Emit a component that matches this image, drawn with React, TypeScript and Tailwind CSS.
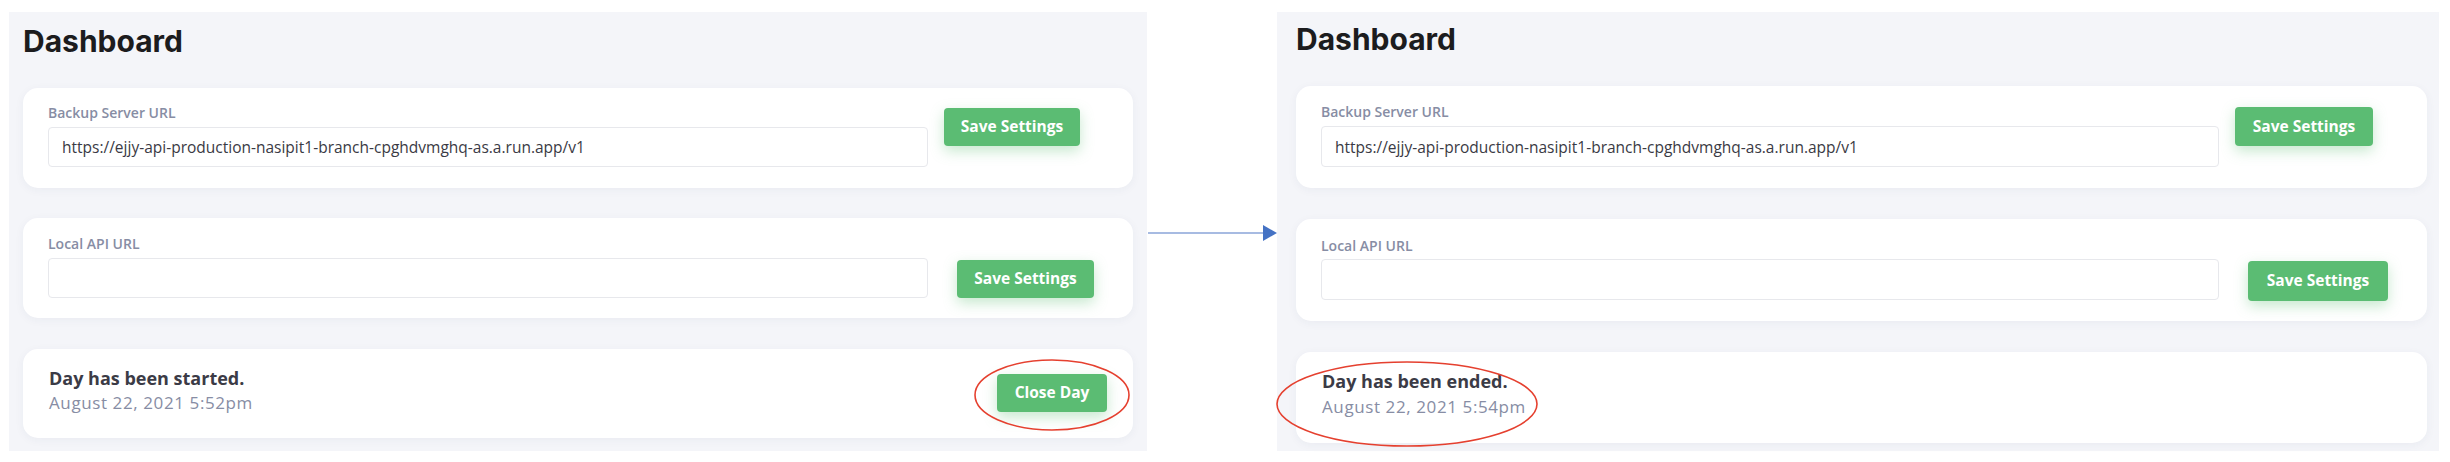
import React from 'react'

// 2 스냅샷: 왼쪽(시작), 오른쪽(종료) — 오른쪽은 약간 확대된 캡처
type Variant = 'left' | 'right'

const V = {
  left: {
    panel: 'ml-[9px] w-[1138px] pl-[14px] pr-[14px] pt-[11px]',
    card1: 'h-[100px] pl-[25px] pt-[15px]',
    card2: 'mt-[30px] h-[100px] pl-[25px] pt-[16px]',
    card3: 'mt-[31px] h-[89px] pl-[26px] pr-[26px] pt-[18px]',
    inputCol: 'w-[880px]',
    input1: 'mt-[4px] h-[40px]',
    input2: 'mt-[4px] h-[40px]',
    btn1: 'ml-[16px] mt-[5px] h-[38px] w-[136px]',
    btn2: 'ml-[29px] mt-[26px] h-[38px] w-[137px]',
    closeBtn: 'mt-[7px] h-[38px] w-[110px]',
    dateGap: 'mt-[4px]',
  },
  right: {
    panel: 'w-[1162px] pl-[19px] pr-[12px] pt-[9px]',
    card1: 'h-[102px] pl-[25px] pt-[16px]',
    card2: 'mt-[31px] h-[102px] pl-[25px] pt-[17px]',
    card3: 'mt-[31px] h-[91px] pl-[26px] pr-[26px] pt-[18px]',
    inputCol: 'w-[898px]',
    input1: 'mt-[4px] h-[41px]',
    input2: 'mt-[3px] h-[41px]',
    btn1: 'ml-[16px] mt-[5px] h-[39px] w-[138px]',
    btn2: 'ml-[29px] mt-[25px] h-[40px] w-[140px]',
    closeBtn: 'hidden',
    dateGap: 'mt-[5px]',
  },
}

const cardCls = 'flex rounded-[15px] bg-white shadow-[0_2px_10px_rgba(40,50,90,0.05)]'
const labelCls = 'block text-[14px] leading-5 font-semibold text-[#878da4]'
const inputCls =
  'block w-full rounded-[4px] border border-[#e7e8ec] bg-white px-[13px] text-[15.5px] text-[#3a3a44] outline-none'
const btnCls =
  'flex shrink-0 items-center justify-center rounded-[4px] bg-[#5bbc73] text-[15.5px] font-bold text-white shadow-[0_5px_14px_rgba(91,188,115,0.35)]'

function Panel({ variant }: { variant: Variant }) {
  const v = V[variant]
  const started = variant === 'left'
  return (
    <div className={`mt-[12px] h-[439px] shrink-0 bg-[#f4f5f9] ${v.panel}`}>
      <h1 className="font-['Inter',sans-serif] text-[30px] leading-9 font-bold text-[#1c1c1e]">Dashboard</h1>

      <div className="mt-[29px]">
        {/* 백업 서버 */}
        <div className={`${cardCls} ${v.card1}`}>
          <div className={v.inputCol}>
            <label className={labelCls}>Backup Server URL</label>
            <input
              readOnly
              value="https://ejjy-api-production-nasipit1-branch-cpghdvmghq-as.a.run.app/v1"
              className={`${inputCls} ${v.input1}`}
            />
          </div>
          <button type="button" className={`${btnCls} ${v.btn1}`}>Save Settings</button>
        </div>

        {/* 로컬 API */}
        <div className={`${cardCls} ${v.card2}`}>
          <div className={v.inputCol}>
            <label className={labelCls}>Local API URL</label>
            <input readOnly value="" className={`${inputCls} ${v.input2}`} />
          </div>
          <button type="button" className={`${btnCls} ${v.btn2}`}>Save Settings</button>
        </div>

        {/* 영업일 상태 */}
        <div className={`${cardCls} justify-between ${v.card3}`}>
          <div>
            <div className="text-[18px] leading-[22px] font-bold text-[#3b3b46]">
              {started ? 'Day has been started.' : 'Day has been ended.'}
            </div>
            <div className={`text-[17px] leading-5 tracking-[0.6px] text-[#878da4] ${v.dateGap}`}>
              {started ? 'August 22, 2021 5:52pm' : 'August 22, 2021 5:54pm'}
            </div>
          </div>
          <button type="button" className={`${btnCls} ${v.closeBtn}`}>Close Day</button>
        </div>
      </div>
    </div>
  )
}

export default function App() {
  return (
    <div className="relative h-[462px] w-[2450px] overflow-hidden bg-white font-['Open_Sans',sans-serif]">
      <div className="flex">
        <Panel variant="left" />
        <div className="w-[130px] shrink-0 pt-[224px]">
          <svg width="130" height="18" viewBox="0 0 130 18">
            <line x1="1" y1="9" x2="118" y2="9" stroke="#8aa5d8" strokeWidth="1.6" />
            <polygon points="116,1 130,9 116,17" fill="#4472c4" />
          </svg>
        </div>
        <Panel variant="right" />
      </div>

      {/* 빨간 표시 */}
      <svg className="pointer-events-none absolute left-0 top-0" width="2450" height="462">
        <ellipse cx="1052" cy="395" rx="77" ry="35" fill="none" stroke="#e5402f" strokeWidth="1.6" />
        <ellipse cx="1407" cy="404" rx="130" ry="42" fill="none" stroke="#e5402f" strokeWidth="1.6" />
      </svg>
    </div>
  )
}
